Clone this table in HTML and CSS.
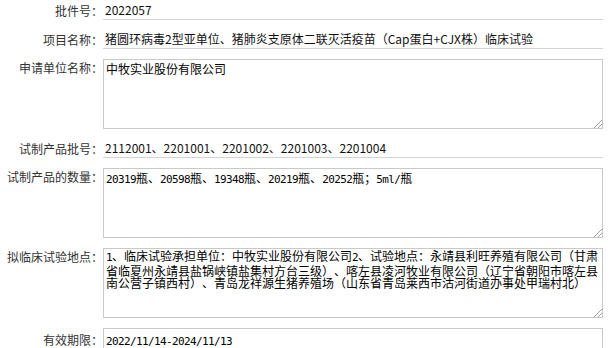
FILE: index.html
```html
<!DOCTYPE html>
<html lang="zh-CN">
<head>
<meta charset="utf-8">
<title>批件信息</title>
<link rel="stylesheet" href="styles.css">
</head>
<body>
<div class="form">
  <div class="row">
    <div class="lbl">批件号：</div>
    <div class="field line">2022057</div>
  </div>
  <div class="row">
    <div class="lbl">项目名称：</div>
    <div class="field line">猪圆环病毒2型亚单位、猪肺炎支原体二联灭活疫苗（Cap蛋白+CJX株）临床试验</div>
  </div>
  <div class="row top">
    <div class="lbl">申请单位名称：</div>
    <div class="field ta ta-sans">中牧实业股份有限公司<svg class="grip" width="9" height="9" viewBox="0 0 9 9"><path d="M1 9L9 1M5 9L9 5" stroke="#a0a0a0" stroke-width="1"/></svg></div>
  </div>
  <div class="row">
    <div class="lbl">试制产品批号：</div>
    <div class="field line">2112001、2201001、2201002、2201003、2201004</div>
  </div>
  <div class="row top">
    <div class="lbl">试制产品的数量：</div>
    <div class="field ta ta-song"><span class="m">20319</span>瓶、<span class="m">20598</span>瓶、<span class="m">19348</span>瓶、<span class="m">20219</span>瓶、<span class="m">20252</span>瓶；<span class="m">5ml/</span>瓶<svg class="grip" width="9" height="9" viewBox="0 0 9 9"><path d="M1 9L9 1M5 9L9 5" stroke="#a0a0a0" stroke-width="1"/></svg></div>
  </div>
  <div class="row top">
    <div class="lbl">拟临床试验地点：</div>
    <div class="field ta ta-song ta-tight"><span class="m">1</span>、临床试验承担单位：中牧实业股份有限公司<span class="m">2</span>、试验地点：永靖县利旺养殖有限公司（甘肃省临夏州永靖县盐锅峡镇盐集村方台三级）、喀左县凌河牧业有限公司（辽宁省朝阳市喀左县南公营子镇西村）、青岛龙祥源生猪养殖场（山东省青岛莱西市沽河街道办事处甲瑞村北）<svg class="grip" width="9" height="9" viewBox="0 0 9 9"><path d="M1 9L9 1M5 9L9 5" stroke="#a0a0a0" stroke-width="1"/></svg></div>
  </div>
  <div class="row">
    <div class="lbl">有效期限：</div>
    <div class="field box"><span class="m">2022/11/14-2024/11/13</span></div>
  </div>
</div>
</body>
</html>
```
FILE: styles.css
```css
html, body {
  margin: 0;
  padding: 0;
  background: #fff;
}
body {
  font-family: "Noto Sans CJK SC", "Microsoft YaHei", sans-serif;
  font-size: 12px;
  color: #111;
  text-spacing-trim: space-all;
}
.form {
  display: flex;
  flex-direction: column;
  gap: 10px;
  padding-top: 1px;
}
.row {
  display: flex;
  align-items: center;
}
.row.top {
  align-items: flex-start;
}
.lbl {
  flex: none;
  width: 103px;
  text-align: right;
  color: #333;
  line-height: 16px;
  white-space: nowrap;
}
.row.top .lbl {
  margin-top: 1px;
}
.field {
  flex: none;
  width: 500px;
  box-sizing: border-box;
}
.line {
  height: 19px;
  line-height: 18px;
  border-bottom: 1px solid #d3d3d3;
  padding-left: 2px;
  white-space: nowrap;
}
.ta {
  position: relative;
  height: 70px;
  border: 1px solid #c9c9c9;
  padding: 1px 2px;
  color: #000;
}
.ta-sans {
  line-height: 16px;
}
.ta-song {
  line-height: 12.5px;
  padding-top: 2.5px;
}
.ta-tight {
  padding-top: 1px;
}
.m {
  font-family: "DejaVu Sans Mono", "Liberation Mono", monospace;
  font-size: 11px;
  letter-spacing: -0.62px;
}
.grip {
  position: absolute;
  right: 0;
  bottom: 0;
  display: block;
}
.box {
  height: 24px;
  border: 1px solid #c9c9c9;
  padding: 2px 2px;
  line-height: 18px;
  color: #000;
}
```
